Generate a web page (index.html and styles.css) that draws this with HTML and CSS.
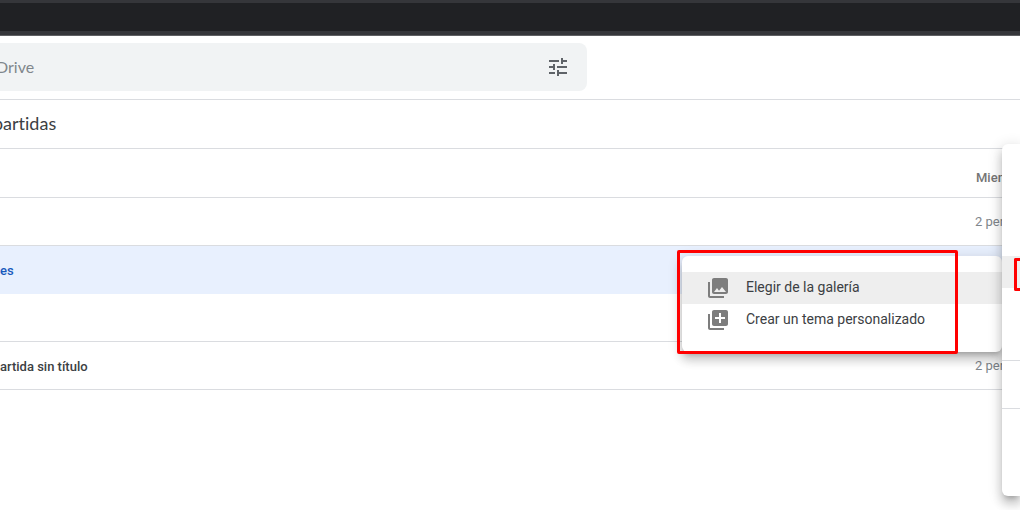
FILE: index.html
```html
<!DOCTYPE html>
<html lang="es">
<head>
<meta charset="utf-8">
<title>Drive</title>
<link rel="stylesheet" href="styles.css">
</head>
<body>
<div class="browser-bar"></div>
<header class="header">
  <form class="search">
    <input class="search-input" type="text" placeholder="Drive" aria-label="Drive">
    <button class="search-options" type="button" aria-label="Opciones">
      <svg width="24" height="24" viewBox="0 0 24 24" fill="currentColor"><path d="M3 17v2h6v-2H3zM3 5v2h10V5H3zm10 16v-2h8v-2h-8v-2h-2v6h2zM7 9v2H3v2h4v2h2V9H7zm14 4v-2H11v2h10zm-6-4h2V7h4V5h-4V3h-2v6z"/></svg>
    </button>
  </form>
</header>
<main>
  <h1 class="title"><span class="title-text">partidas</span></h1>
  <table class="files">
    <thead>
      <tr class="head"><th></th><th class="members">Miem</th></tr>
    </thead>
    <tbody>
      <tr><td></td><td class="members">2 per</td></tr>
      <tr class="selected"><td class="name">es</td><td class="members"></td></tr>
      <tr><td></td><td class="members"></td></tr>
      <tr><td class="name">artida sin título</td><td class="members">2 per</td></tr>
    </tbody>
  </table>
</main>
<div class="menu submenu">
  <button class="item active" type="button">
    <svg width="24" height="24" viewBox="0 0 24 24" fill="currentColor"><path d="M22 16V4c0-1.100-.9-2-2-2H8c-1.100 0-2 .9-2 2v12c0 1.100.9 2 2 2h12c1.100 0 2-.9 2-2zm-11-4l2.030 2.710L16 11l4 5H8l3-4zM2 6v14c0 1.100.9 2 2 2h14v-2H4V6H2z"/></svg>
    <span class="label">Elegir de la galería</span>
  </button>
  <button class="item" type="button">
    <svg width="24" height="24" viewBox="0 0 24 24" fill="currentColor"><path d="M4 6H2v14c0 1.100.9 2 2 2h14v-2H4V6zm16-4H8c-1.100 0-2 .9-2 2v12c0 1.100.9 2 2 2h12c1.100 0 2-.9 2-2V4c0-1.100-.9-2-2-2zm-1 9h-4v4h-2v-4H9V9h4V5h2v4h4v2z"/></svg>
    <span class="label">Crear un tema personalizado</span>
  </button>
</div>
<div class="menu context-menu">
  <div class="group group-first"></div>
  <div class="group-active"></div>
  <div class="group group-middle"></div>
  <div class="group group-short"></div>
</div>
<div class="mark mark-submenu"></div>
<div class="mark mark-item"></div>
</body>
</html>
```
FILE: styles.css
```css
* { box-sizing: border-box; }

body {
  margin: 0;
  min-height: 100vh;
  position: relative;
  overflow: hidden;
  background: #fff;
  color: #3c4043;
  font-family: Roboto, "Liberation Sans", sans-serif;
}

.browser-bar {
  height: 36px;
  background: #202124;
  border-top: 3px solid #35363a;
  border-bottom: 1px solid #5f6063;
  box-shadow: inset 0 -4px #35363a;
}

.header {
  padding: 7px 0 8px;
  border-bottom: 1px solid #dadce0;
}

.search {
  display: flex;
  align-items: center;
  width: 100%;
  max-width: 587px;
  height: 48px;
  padding-right: 17px;
  background: #f1f3f4;
  border-radius: 0 8px 8px 0;
}

.search-input {
  flex: 1;
  min-width: 0;
  margin-left: -4px;
  padding: 0;
  border: 0;
  outline: 0;
  background: none;
  color: #3c4043;
  font: 16px/24px Lato, sans-serif;
}

.search-input::placeholder { color: #80868b; opacity: 1; }

.search-options {
  display: flex;
  padding: 0;
  border: 0;
  background: none;
  color: #5f6368;
}

.title {
  display: flex;
  align-items: center;
  height: 49px;
  margin: 0;
  padding-bottom: 2px;
  border-bottom: 1px solid #dadce0;
  font: 18px/24px Lato, sans-serif;
  font-variant-ligatures: none;
}

.title-text { margin-left: -7px; }

.files {
  width: 100%;
  table-layout: fixed;
  border-collapse: separate;
  border-spacing: 0;
  font-size: 13px;
  line-height: 20px;
}

.files th,
.files td {
  height: 48px;
  padding: 0;
  border-bottom: 1px solid #dadce0;
  text-align: left;
  font-weight: 500;
}

.files .name { padding-top: 2px; }

.files .head th {
  height: 49px;
  padding-top: 10px;
}

.files .members {
  width: 45px;
  color: #80868b;
  font-weight: 400;
  white-space: nowrap;
}

.files .head .members {
  padding-left: 1px;
  color: #757575;
  font-weight: 500;
}

.files .selected td {
  background: #e8f0fe;
  border-bottom-color: #e8f0fe;
  color: #185abc;
}

.menu {
  position: absolute;
  background: #fff;
  box-shadow: 0 8px 10px 1px rgba(0, 0, 0, .14), 0 3px 14px 2px rgba(0, 0, 0, .12), 0 5px 5px -3px rgba(0, 0, 0, .2);
}

.submenu {
  top: 256px;
  right: 18px;
  width: 320px;
  padding: 16px 0;
  border-radius: 6px;
}

.item {
  display: flex;
  align-items: center;
  gap: 16px;
  width: 100%;
  height: 32px;
  padding: 0 24px;
  border: 0;
  background: none;
  color: #3c4043;
  font: 14px/20px Roboto, sans-serif;
  text-align: left;
}

.item svg { color: #7d7d7d; }
.item.active { background: #eee; }
.label { padding-bottom: 2px; }

.context-menu {
  top: 144px;
  right: 0;
  width: 18px;
  padding-bottom: 8px;
  border-radius: 6px 0 0 6px;
}

.group-first { height: 112px; }
.group-active { height: 32px; background: #eee; }
.group-middle { height: 73px; border-bottom: 1px solid #dadce0; }
.group-short { height: 48px; margin-bottom: 79px; border-bottom: 1px solid #dadce0; }

.mark {
  position: absolute;
  border: 3px solid #f00;
  border-radius: 2px;
  pointer-events: none;
}

.mark-submenu {
  top: 250px;
  right: 62px;
  width: 281px;
  height: 104px;
}

.mark-item {
  top: 258px;
  right: 0;
  width: 6px;
  height: 33px;
  border-right: 0;
  border-radius: 2px 0 0 2px;
}
```
